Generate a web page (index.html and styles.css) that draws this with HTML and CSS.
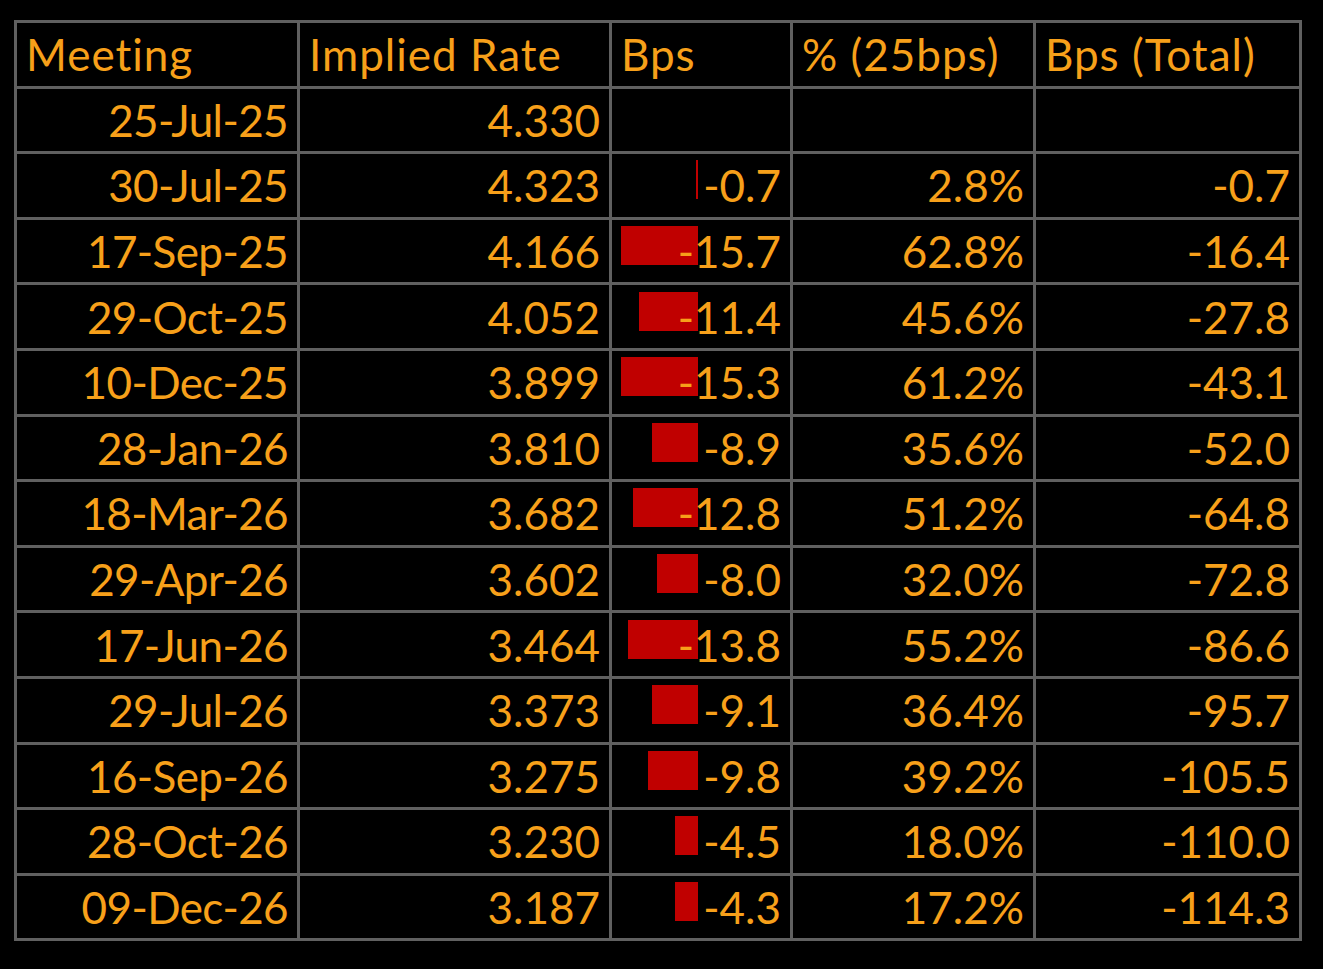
FILE: index.html
```html
<!DOCTYPE html>
<html>
<head>
<meta charset="utf-8">
<link rel="stylesheet" href="styles.css">
</head>
<body>
<main class="page">
<table class="rates">
  <colgroup>
    <col class="c-meeting"><col class="c-rate"><col class="c-bps"><col class="c-pct"><col class="c-total">
  </colgroup>
  <thead>
    <tr><th>Meeting</th><th>Implied Rate</th><th>Bps</th><th>% (25bps)</th><th>Bps (Total)</th></tr>
  </thead>
  <tbody>
    <tr><td class="date">25-Jul-25</td><td>4.330</td><td class="bps"></td><td></td><td></td></tr>
    <tr><td class="date">30-Jul-25</td><td>4.323</td><td class="bps"><div class="bps-cell"><div class="bar-track"><span class="bar thin" style="width:2px"></span></div><span class="val">-0.7</span></div></td><td>2.8%</td><td>-0.7</td></tr>
    <tr><td class="date">17-Sep-25</td><td>4.166</td><td class="bps"><div class="bps-cell"><div class="bar-track"><span class="bar" style="width:77px"></span></div><span class="val">-15.7</span></div></td><td>62.8%</td><td>-16.4</td></tr>
    <tr><td class="date">29-Oct-25</td><td>4.052</td><td class="bps"><div class="bps-cell"><div class="bar-track"><span class="bar" style="width:59px"></span></div><span class="val">-11.4</span></div></td><td>45.6%</td><td>-27.8</td></tr>
    <tr><td class="date">10-Dec-25</td><td>3.899</td><td class="bps"><div class="bps-cell"><div class="bar-track"><span class="bar" style="width:77px"></span></div><span class="val">-15.3</span></div></td><td>61.2%</td><td>-43.1</td></tr>
    <tr><td class="date">28-Jan-26</td><td>3.810</td><td class="bps"><div class="bps-cell"><div class="bar-track"><span class="bar" style="width:46px"></span></div><span class="val">-8.9</span></div></td><td>35.6%</td><td>-52.0</td></tr>
    <tr><td class="date">18-Mar-26</td><td>3.682</td><td class="bps"><div class="bps-cell"><div class="bar-track"><span class="bar" style="width:65px"></span></div><span class="val">-12.8</span></div></td><td>51.2%</td><td>-64.8</td></tr>
    <tr><td class="date">29-Apr-26</td><td>3.602</td><td class="bps"><div class="bps-cell"><div class="bar-track"><span class="bar" style="width:41px"></span></div><span class="val">-8.0</span></div></td><td>32.0%</td><td>-72.8</td></tr>
    <tr><td class="date">17-Jun-26</td><td>3.464</td><td class="bps"><div class="bps-cell"><div class="bar-track"><span class="bar" style="width:70px"></span></div><span class="val">-13.8</span></div></td><td>55.2%</td><td>-86.6</td></tr>
    <tr><td class="date">29-Jul-26</td><td>3.373</td><td class="bps"><div class="bps-cell"><div class="bar-track"><span class="bar" style="width:46px"></span></div><span class="val">-9.1</span></div></td><td>36.4%</td><td>-95.7</td></tr>
    <tr><td class="date">16-Sep-26</td><td>3.275</td><td class="bps"><div class="bps-cell"><div class="bar-track"><span class="bar" style="width:50px"></span></div><span class="val">-9.8</span></div></td><td>39.2%</td><td>-105.5</td></tr>
    <tr><td class="date">28-Oct-26</td><td>3.230</td><td class="bps"><div class="bps-cell"><div class="bar-track"><span class="bar" style="width:23px"></span></div><span class="val">-4.5</span></div></td><td>18.0%</td><td>-110.0</td></tr>
    <tr><td class="date">09-Dec-26</td><td>3.187</td><td class="bps"><div class="bps-cell"><div class="bar-track"><span class="bar" style="width:23px"></span></div><span class="val">-4.3</span></div></td><td>17.2%</td><td>-114.3</td></tr>
  </tbody>
</table>
</main>
</body>
</html>
```

FILE: styles.css
```css
html, body {
  margin: 0;
  padding: 0;
  background: #000;
}
.page {
  padding: 20px 0 0 14px;
}
.rates {
  border-collapse: collapse;
  table-layout: fixed;
  width: 1288px;
  font-family: Lato, "Open Sans", sans-serif;
  font-size: 44px;
  color: #f7a01a;
  border: 3px solid #606060;
}
.c-meeting { width: 283px; }
.c-rate { width: 312px; }
.c-bps { width: 181px; }
.c-pct { width: 243px; }
.c-total { width: 266px; }
.rates th, .rates td {
  border: 3px solid #606060;
  height: 65.6px;
  box-sizing: border-box;
  padding: 0 9px;
  line-height: 1;
  white-space: nowrap;
  overflow: hidden;
}
.rates th {
  text-align: left;
  font-weight: normal;
  letter-spacing: 1px;
}
.rates td {
  text-align: right;
}
.rates td.date {
  letter-spacing: -0.6px;
}
.bps-cell {
  display: grid;
  grid-template-areas: "stack";
  align-items: center;
}
.bar-track {
  grid-area: stack;
  justify-self: start;
  width: 77px;
  display: flex;
  justify-content: flex-end;
  align-self: start;
  margin-top: -3px;
}
.bar {
  display: block;
  height: 39px;
  background: #c00000;
}
.val {
  grid-area: stack;
  justify-self: end;
  position: relative;
  z-index: 1;
}
```
